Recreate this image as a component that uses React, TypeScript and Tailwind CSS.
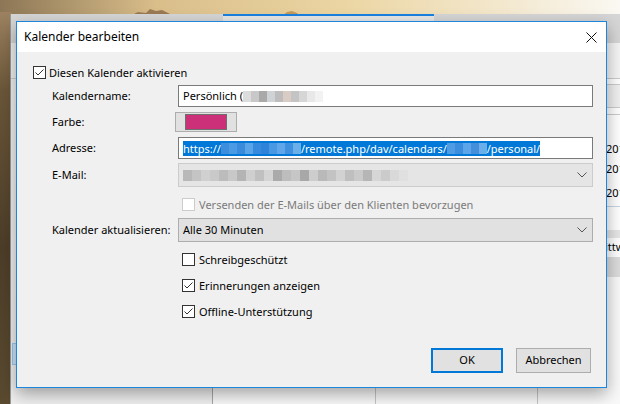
import React from 'react';

const font = { fontFamily: '"Noto Sans", "Liberation Sans", Arial, sans-serif' };

const Check: React.FC<{ checked?: boolean; disabled?: boolean }> = ({ checked, disabled }) => (
  <span
    className={`w-[13px] h-[13px] shrink-0 border bg-white flex items-center justify-center ${
      disabled ? 'border-[#cccccc]' : 'border-[#333333]'
    }`}
  >
    {checked && (
      <svg width="11" height="11" viewBox="0 0 11 11">
        <polyline points="1.5,5.5 4,8 9.5,2.5" fill="none" stroke="#333" strokeWidth="1" />
      </svg>
    )}
  </span>
);

const Chevron = () => (
  <svg width="10" height="6" viewBox="0 0 10 6" className="mr-[5px]">
    <polyline points="0.5,0.5 5,5 9.5,0.5" fill="none" stroke="#555" strokeWidth="1" />
  </svg>
);

// blurred-out personal data
const Blur: React.FC<{ shades: string[]; w?: number }> = ({ shades, w = 8 }) => (
  <span className="inline-flex h-[11px] items-stretch">
    {shades.map((c, i) => (
      <span key={i} style={{ background: c, width: w }} />
    ))}
  </span>
);

const Row: React.FC<{ label?: string; className?: string; children: React.ReactNode }> = ({
  label,
  className = '',
  children,
}) => (
  <div className={`flex items-center pl-[35px] pr-[13px] ${className}`}>
    <div className="w-[126px] shrink-0">{label}</div>
    <div className="flex-1 flex items-center">{children}</div>
  </div>
);

const CheckRow: React.FC<{ label: string; checked?: boolean; disabled?: boolean; className?: string }> = ({
  label,
  checked,
  disabled,
  className = '',
}) => (
  <div className={`flex items-center pl-[165px] h-[13px] ${className}`}>
    <Check checked={checked} disabled={disabled} />
    <span className={`ml-[4px] leading-none ${disabled ? 'text-[#7a7a7a]' : ''}`}>{label}</span>
  </div>
);

const Dialog = () => (
  <div className="absolute left-[16px] top-[21px] w-[591px] h-[367px] border border-[#1c86dc] bg-[#f0f0f0] flex flex-col shadow-[0_6px_16px_rgba(0,0,0,0.35)]">
    {/* title bar */}
    <div className="h-[30px] bg-white flex items-center justify-between pl-[7px] pr-[9px] shrink-0">
      <span className="text-[12px] text-black">Kalender bearbeiten</span>
      <svg width="11" height="11" viewBox="0 0 11 11">
        <path d="M0.5 0.5 L10.5 10.5 M10.5 0.5 L0.5 10.5" stroke="#111" strokeWidth="1" />
      </svg>
    </div>

    <div className="flex flex-col text-[11px] text-black">
      <div className="flex items-center pl-[16px] mt-[14px] h-[13px]">
        <Check checked />
        <span className="ml-[3px] leading-none">Diesen Kalender aktivieren</span>
      </div>

      <Row label="Kalendername:" className="mt-[6px]">
        <div className="h-[22px] flex-1 bg-white border border-[#7a7a7a] flex items-center pl-[4px]">
          <span>Persönlich (</span>
          <Blur shades={['#dcdcdc', '#c8c8c8', '#a9a9a9', '#cfd3d6', '#bdbdbd', '#d8ccc4', '#c4c4c4', '#d6d6d6', '#e8e8e8', '#f2f2f2']} />
        </div>
      </Row>

      <Row label="Farbe:" className="mt-[5px]">
        <div className="ml-[-3px] w-[62px] h-[20px] bg-[#e1e1e1] border border-[#adadad] flex items-center justify-center">
          <div className="w-[42px] h-[16px] bg-[#cb3079] border border-[#6e6e6e]" />
        </div>
      </Row>

      <Row label="Adresse:" className="mt-[5px]">
        <div className="h-[22px] flex-1 bg-white border border-[#7a7a7a] flex items-center pl-[4px]">
          <span className="bg-[#0078d7] text-white flex items-center h-[15px] leading-none">
            https://
            <Blur
              w={8}
              shades={['#3d8fdd', '#4b9ae4', '#3a8bdb', '#5aa4e8', '#378ade', '#2f84da', '#4898e3', '#5fa7ea', '#3f91e0', '#6aaeea']}
            />
            /remote.php/dav/calendars/
            <Blur w={8} shades={['#4d9ce4', '#3a8edd', '#5ba5e8', '#448fdc', '#6aaeea']} />
            /personal/
          </span>
        </div>
      </Row>

      <Row label="E-Mail:" className="mt-[4px]">
        <div className="h-[24px] flex-1 bg-[#e5e5e5] border border-[#cccccc] flex items-center justify-between pl-[4px]">
          <Blur
            w={9}
            shades={[
              '#b8b8b8', '#c4c4c4', '#d0d0d0', '#c9c9c9', '#bcbcbc', '#c8c8c8', '#b4b4b4', '#cfcfcf',
              '#c0c0c0', '#d4d4d4', '#aaaaaa', '#bdbdbd', '#c6c6c6', '#a8a8a8', '#cdcdcd', '#b9b9b9',
              '#c3c3c3', '#d2d2d2', '#bfbfbf', '#cacaca', '#b6b6b6', '#d6d6d6', '#cbcbcb', '#d9d9d9', '#e0e0e0',
            ]}
          />
          <Chevron />
        </div>
      </Row>

      <CheckRow label="Versenden der E-Mails über den Klienten bevorzugen" disabled className="mt-[11px]" />

      <Row label="Kalender aktualisieren:" className="mt-[7px]">
        <div className="h-[24px] flex-1 bg-[#e1e1e1] border border-[#adadad] flex items-center justify-between pl-[4px]">
          <span>Alle 30 Minuten</span>
          <Chevron />
        </div>
      </Row>

      <CheckRow label="Schreibgeschützt" className="mt-[11px]" />
      <CheckRow label="Erinnerungen anzeigen" checked className="mt-[13px]" />
      <CheckRow label="Offline-Unterstützung" checked className="mt-[13px]" />

      <div className="flex justify-end gap-[13px] pr-[15px] mt-[30px]">
        <button className="w-[72px] h-[25px] bg-[#e1e1e1] border-2 border-[#0078d7] text-[11px]">OK</button>
        <button className="w-[75px] h-[25px] bg-[#e1e1e1] border border-[#adadad] text-[11px]">Abbrechen</button>
      </div>
    </div>
  </div>
);

const AppWindow = () => (
  <div className="absolute left-[10px] top-[14px] right-0 bottom-0 bg-[#f7f7f7] flex flex-col border-l border-[#9a9a9a]">
    {/* tab strip */}
    <div className="h-[29px] bg-[#d6d6d6] flex shrink-0">
      <div className="ml-[212px] w-[211px] h-[7px] bg-[#e8e8e8] border-t-2 border-[#1a82e2]" />
    </div>
    <div className="flex flex-1">
      {/* sidebar */}
      <div className="w-[202px] shrink-0 bg-[#f0f0f0] border-r border-[#a8a8a8] flex flex-col">
        <div className="h-[36px] border-b border-[#cfcfcf]" />
        <div className="h-[264px]" />
        <div className="h-[22px] mx-[1px] bg-[#cce4f7] border border-[#99c9ef]" />
      </div>
      {/* main */}
      <div className="flex-1 min-w-0 overflow-hidden flex flex-col text-[11px] text-black whitespace-nowrap" style={font}>
        <div className="h-[36px] bg-[#f5f5f5] border-b border-[#cccccc]" />
        <div className="h-[6px] bg-white border-b border-[#cccccc]" />
        <div className="h-[23px] bg-[#f0f0f0] border-b border-[#cccccc]" />
        <div className="h-[7px] bg-white border-b border-[#cccccc]" />
        <div className="h-[92px] bg-white border-b border-[#c7d5e4] pl-[393px] pt-[26px] flex flex-col leading-[16px]">
          <span>2017</span>
          <span className="mt-[4px]">2017</span>
          <span className="mt-[8px]">2017</span>
        </div>
        <div className="h-[23px] bg-white" />
        <div className="h-[8px] bg-[#e6e6e6]" />
        <div className="h-[19px] bg-white pl-[382px] flex items-center">Mittwoch</div>
        <div className="h-[20px] bg-[#dcdcdc]" />
        <div className="flex-1 flex bg-[#f9f9f9]">
          <div className="w-[163px] border-r border-[#c6c6c6]" />
          <div className="w-[162px] border-r border-[#c6c6c6]" />
          <div className="flex-1" />
        </div>
      </div>
    </div>
  </div>
);

export default function App() {
  return (
    <div
      className="relative w-[620px] h-[404px] overflow-hidden bg-[linear-gradient(90deg,#8c7655_0%,#d9be8a_25%,#ebd5a2_55%,#f3e7cc_80%,#faf8f2_100%)]"
      style={font}
    >
      {/* desktop: left rocky strip */}
      <div className="absolute left-0 top-[12px] bottom-0 w-[12px] bg-[linear-gradient(180deg,#9c8260_0%,#6a5639_20%,#4c3d28_60%,#5a4a30_100%)]" />
      <svg className="absolute left-0 top-0" width="620" height="16" viewBox="0 0 620 16">
        <path d="M130 16 L138 12 L146 13 L150 9 L156 11 L162 10 L170 14 L178 16 Z" fill="#9a7a55" />
        <path d="M282 16 L287 12 L292 11 L297 13 L300 16 Z" fill="#c59a5a" />
      </svg>
      <AppWindow />
      <Dialog />
    </div>
  );
}
